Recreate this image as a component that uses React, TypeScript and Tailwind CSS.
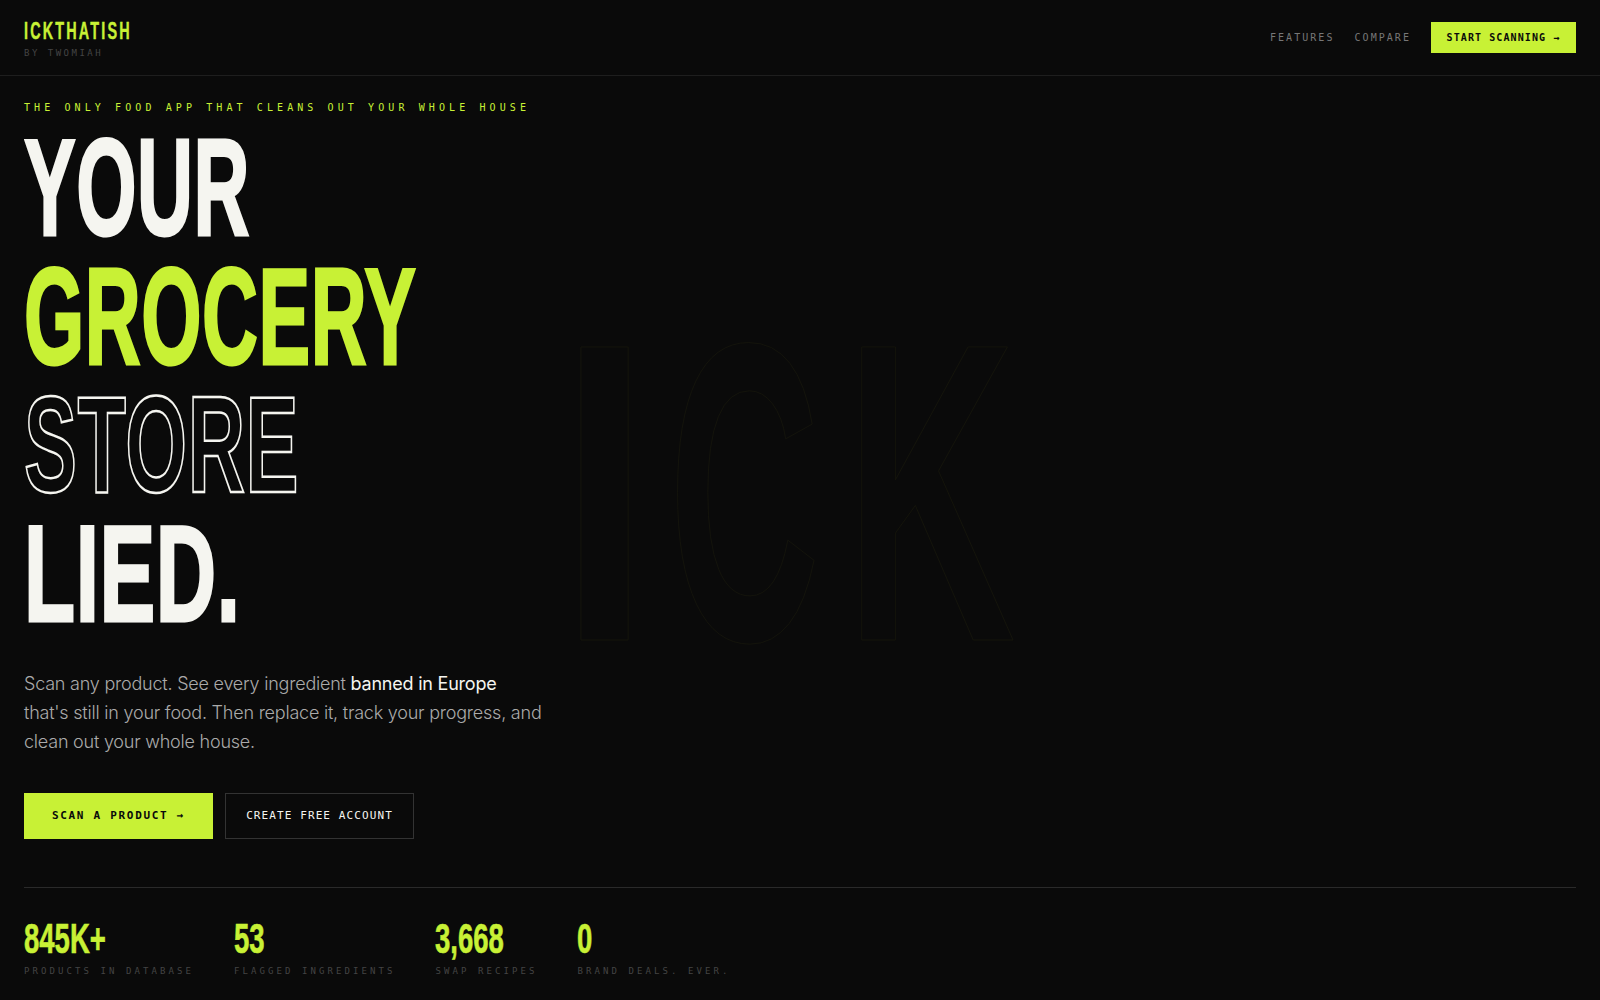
const display = "font-['Liberation_Sans_Narrow','Liberation_Sans',sans-serif] font-bold"
const mono = "font-['DejaVu_Sans_Mono',monospace]"

const stats = [
  { value: '845K+', label: 'PRODUCTS IN DATABASE' },
  { value: '53', label: 'FLAGGED INGREDIENTS' },
  { value: '3,668', label: 'SWAP RECIPES' },
  { value: '0', label: 'BRAND DEALS. EVER.' },
]

export default function App() {
  return (
    <div className="relative min-h-[1000px] overflow-hidden bg-[#0a0a0a] font-['Inter',sans-serif] text-[#f5f5f0]">
      <nav className="flex h-[76px] items-center justify-between border-b border-[#1e1e1e] px-6">
        <div className="pt-[2px]">
          <div className={`${display} origin-left scale-x-[0.6] text-[24px] leading-[24px] tracking-[0.15em] whitespace-nowrap text-[#c8f135] [-webkit-text-stroke:0.4px_#c8f135]`}>
            ICKTHATISH
          </div>
          <div className={`${mono} mt-[5px] text-[9px] leading-[10px] tracking-[2.5px] text-[#444]`}>BY TWOMIAH</div>
        </div>
        <div className="flex items-center gap-5">
          <a className={`${mono} text-[10px] tracking-[2.05px] text-[#777]`}>FEATURES</a>
          <a className={`${mono} text-[10px] tracking-[2.05px] text-[#777]`}>COMPARE</a>
          <a className={`${mono} flex h-[31px] w-[145px] items-center justify-center bg-[#c8f135] text-[10px] font-bold tracking-[1.1px] text-[#0a0a0a]`}>
            START SCANNING →
          </a>
        </div>
      </nav>

      <main className="px-6">
        <p className={`${mono} mt-[26px] text-[10px] leading-[12px] tracking-[4.1px] text-[#c8f135]`}>
          THE ONLY FOOD APP THAT CLEANS OUT YOUR WHOLE HOUSE
        </p>

        <h1 className={`${display} mt-[10px] text-[137px] leading-[128.7px] tracking-[1px]`}>
          <span className="block origin-left scale-x-[0.565] [-webkit-text-stroke:3px_#f5f5f0]">YOUR</span>
          <span className="block origin-left scale-x-[0.565] text-[#c8f135] [-webkit-text-stroke:3px_#c8f135]">GROCERY</span>
          <span className="block origin-left scale-x-[0.58] text-transparent [-webkit-text-stroke:2.5px_#f5f5f0]">STORE</span>
          <span className="block origin-left scale-x-[0.61] [-webkit-text-stroke:3px_#f5f5f0]">LIED.</span>
        </h1>

        <p className="mt-[30px] w-[540px] text-[18px] leading-[29px] font-light tracking-[-0.22px] text-[#aaa]">
          Scan any product. See every ingredient <strong className="font-normal text-[#f5f5f0]">banned in Europe</strong>
          <br />
          that's still in your food. Then replace it, track your progress, and
          <br />
          clean out your whole house.
        </p>

        <div className="mt-[37px] flex gap-3">
          <a className={`${mono} flex h-[46px] w-[189px] items-center justify-center bg-[#c8f135] text-[11px] font-bold tracking-[1.7px] text-[#0a0a0a]`}>
            SCAN A PRODUCT →
          </a>
          <a className={`${mono} flex h-[46px] w-[189px] items-center justify-center border border-[#333] text-[11px] tracking-[1.1px] text-[#f5f5f0]`}>
            CREATE FREE ACCOUNT
          </a>
        </div>

        <div className="mt-[48px] flex gap-10 border-t border-[#2a2a2a] pt-[28px]">
          {stats.map((s) => (
            <div key={s.label}>
              <div className={`${display} w-0 origin-left scale-x-[0.64] text-[43px] leading-[44px] whitespace-nowrap text-[#c8f135] [-webkit-text-stroke:0.6px_#c8f135]`}>
                {s.value}
              </div>
              <div className={`${mono} mt-[5px] text-[9px] leading-[12px] tracking-[3.08px] whitespace-nowrap text-[#444]`}>{s.label}</div>
            </div>
          ))}
        </div>
      </main>

      <div className={`${display} pointer-events-none absolute top-[252px] left-[559px] flex text-[426px] leading-[480px] text-transparent [-webkit-text-stroke:1px_#17170c]`}>
        <span className="w-[110px] origin-left scale-x-[0.77]">I</span>
        <span className="w-[177px] origin-left scale-x-[0.49]">C</span>
        <span className="origin-left scale-x-[0.55]">K</span>
      </div>
    </div>
  )
}
